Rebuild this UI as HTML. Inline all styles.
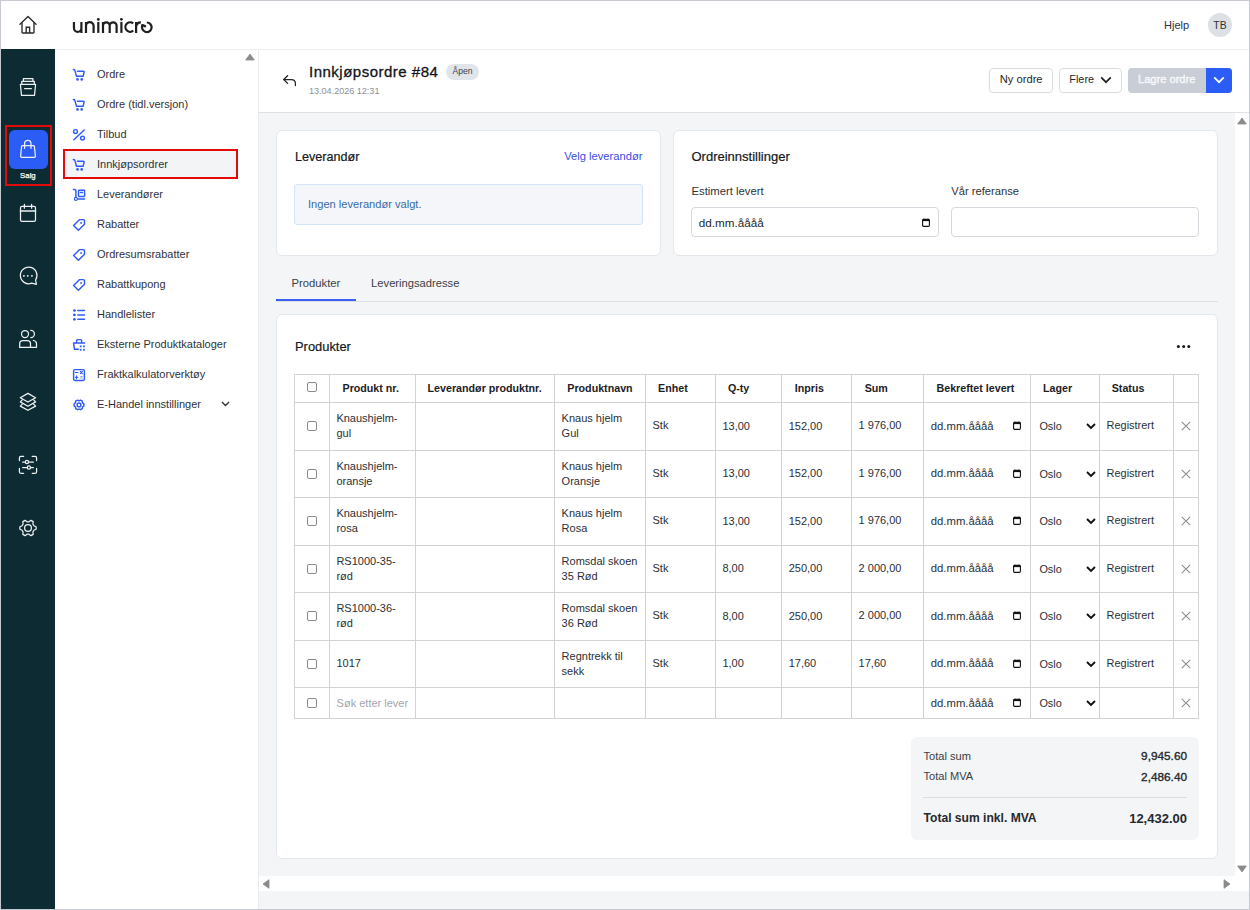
<!DOCTYPE html><html><head><meta charset="utf-8"><style>
html,body{margin:0;padding:0;}
body{width:1250px;height:910px;position:relative;overflow:hidden;background:#f4f5f7;font-family:"Liberation Sans", sans-serif;}
.t{position:absolute;white-space:nowrap;line-height:1;}
.b{position:absolute;box-sizing:border-box;}
.i{position:absolute;overflow:visible;}
</style></head><body>
<div class="b" style="left:0px;top:0px;width:1250px;height:50px;background:#fff;"></div>
<div class="b" style="left:0px;top:49px;width:1250px;height:1px;background:#eceef1;"></div>
<svg class="i" style="left:19px;top:15px;" width="18" height="19" viewBox="0 0 18 19" fill="none"><path d="M1 9.2 L9 1.4 L17 9.2" stroke="#2a2a2a" stroke-width="1.35" stroke-linecap="round" stroke-linejoin="round"/><path d="M3 7.4 V17.3 Q3 18 3.7 18 H14.3 Q15 18 15 17.3 V7.4" stroke="#2a2a2a" stroke-width="1.35" stroke-linejoin="round"/><path d="M7.2 18 V12.2 H10.6 V18" stroke="#2a2a2a" stroke-width="1.4"/></svg>
<svg class="i" style="left:0px;top:0px;" width="160" height="40" viewBox="0 0 160 40" fill="none"><g stroke="#1f1f1f" stroke-width="2.2" fill="none"><path d="M73.95 21.9 V27.9 A3.725 3.9 0 0 0 81.4 27.9 M81.4 21.9 V32.9"/><path d="M86 32.9 V21.9 M86 26.1 A3.8 3.9 0 0 1 93.6 26.1 V32.9"/><path d="M98.3 21.9 V32.9"/><path d="M103 32.9 V21.9 M103 25.6 A3.35 3.3 0 0 1 109.7 25.6 V32.9 M109.7 25.6 A3.45 3.3 0 0 1 116.6 25.6 V32.9"/><path d="M121.4 21.9 V32.9"/><path d="M133.2 23.4 A4.75 4.75 0 1 0 133.2 30.7"/><path d="M136.1 32.9 V21.9 M136.1 27 Q136.4 22.3 140.9 22.3"/><path d="M146.8 22.5 A4.8 4.8 0 1 1 142.64 24.9"/><path d="M142.4 25.2 L145 26.2" stroke-linecap="round" stroke-width="2.4"/></g><circle cx="98.3" cy="19.4" r="1.4" fill="#1f1f1f"/><circle cx="121.4" cy="19.3" r="1.4" fill="#1f1f1f"/></svg>
<div class="t" style="left:1164px;top:19.50px;font-size:11px;color:#2b2f36;font-weight:normal;">Hjelp</div>
<div class="b" style="left:1208px;top:13px;width:24px;height:24px;background:#dde0e5;border-radius:50%;"></div>
<div class="t" style="left:1213.3px;top:20.60px;font-size:10.4px;color:#2b2f36;font-weight:normal;">TB</div>
<div class="b" style="left:0px;top:49px;width:55px;height:861px;background:#0d2b33;"></div>
<svg class="i" style="left:16px;top:76px;" width="24" height="24" viewBox="0 0 24 24" fill="none"><g stroke="#eef1f2" stroke-width="1.25" fill="none" stroke-linecap="round" stroke-linejoin="round"><path d="M7.4 5.2 V2.6 H16.9 V5.2"/><path d="M5.8 7.8 V5.3 H18.3 V7.8"/><path d="M4.4 8.3 H19.6 L18.5 19.4 H5.5 Z"/><path d="M8.6 12.6 H15.4"/></g></svg>
<div class="b" style="left:9px;top:130px;width:39px;height:39px;background:#2b5cf6;border-radius:6px;"></div>
<svg class="i" style="left:16px;top:137px;" width="24" height="24" viewBox="0 0 24 24" fill="none"><g stroke="#eef1f2" stroke-width="1.25" fill="none" stroke-linecap="round" stroke-linejoin="round"><path d="M6.6 8.6 H17.4 Q18.3 8.6 18.4 9.5 L19.4 19.3 Q19.4 20.3 18.4 20.3 H5.6 Q4.6 20.3 4.6 19.3 L5.6 9.5 Q5.7 8.6 6.6 8.6 Z"/><path d="M8.6 11.3 V6.8 Q8.6 3.4 11.8 3.4 Q15 3.4 15 6.8 V11.3"/></g></svg>
<div class="t" style="left:20.1px;top:172.40px;font-size:7.8px;color:#ffffff;font-weight:normal;-webkit-text-stroke:0.25px #fff;">Salg</div>
<div class="b" style="left:5px;top:125px;width:47px;height:61px;border:2px solid #e50a0a;"></div>
<svg class="i" style="left:16px;top:201px;" width="24" height="24" viewBox="0 0 24 24" fill="none"><g stroke="#eef1f2" stroke-width="1.25" fill="none" stroke-linecap="round" stroke-linejoin="round"><rect x="4.5" y="5.4" width="15" height="14.9" rx="1.4"/><path d="M4.5 10 H19.5" stroke-width="1.6"/><path d="M8.4 3.3 V7.2 M15.6 3.3 V7.2"/></g></svg>
<svg class="i" style="left:16px;top:264px;" width="24" height="24" viewBox="0 0 24 24" fill="none"><g stroke="#eef1f2" stroke-width="1.25" fill="none" stroke-linecap="round" stroke-linejoin="round"><path d="M19.6 16 A8.3 8.3 0 1 0 15.6 19.2 L20.4 20.3 Z"/></g><g fill="#eef1f2"><rect x="7.1" y="11.1" width="1.6" height="1.6"/><rect x="10.9" y="11.1" width="1.6" height="1.6"/><rect x="15.1" y="11.1" width="1.6" height="1.6"/></g></svg>
<svg class="i" style="left:16px;top:327px;" width="24" height="24" viewBox="0 0 24 24" fill="none"><g stroke="#eef1f2" stroke-width="1.25" fill="none" stroke-linecap="round" stroke-linejoin="round"><circle cx="9" cy="7" r="3.5"/><path d="M14.8 3.4 A3.6 3.6 0 0 1 14.8 10.6"/><path d="M3.7 20.3 V16.6 Q3.7 13.5 6.8 13.5 H11.4 Q14.5 13.5 14.5 16.6 V20.3"/><path d="M17.4 13.5 Q20.5 13.8 20.5 16.8 V20.3 H3.7"/></g></svg>
<svg class="i" style="left:16px;top:390px;" width="24" height="24" viewBox="0 0 24 24" fill="none"><g stroke="#eef1f2" stroke-width="1.25" fill="none" stroke-linecap="round" stroke-linejoin="round"><path d="M11.9 3.4 L19.6 7.7 L11.9 12 L4.3 7.7 Z"/><path d="M6.3 9.9 L4.3 11.9 L11.9 16.2 L19.6 11.9 L17.6 9.9"/><path d="M6.3 14.1 L4.3 16.1 L11.9 20.3 L19.6 16.1 L17.6 14.1"/></g></svg>
<svg class="i" style="left:16px;top:453px;" width="24" height="24" viewBox="0 0 24 24" fill="none"><g stroke="#eef1f2" stroke-width="1.25" fill="none" stroke-linecap="round" stroke-linejoin="round"><path d="M3.4 7.6 V4.9 Q3.4 3.4 4.9 3.4 H7.6"/><path d="M16.2 3.4 H19.1 Q20.6 3.4 20.6 4.9 V7.6"/><path d="M20.6 15.4 V18.8 Q20.6 20.3 19.1 20.3 H16.2"/><path d="M7.6 20.3 H4.9 Q3.4 20.3 3.4 18.8 V15.4"/><path d="M6.6 9 H9.3 M12.6 9 H17.4 M6.6 14.5 H11.3 M14.5 14.5 H17.4"/><circle cx="10.95" cy="9" r="1.6"/><circle cx="12.9" cy="14.5" r="1.6"/></g></svg>
<svg class="i" style="left:16px;top:516px;" width="24" height="24" viewBox="0 0 24 24" fill="none"><g stroke="#eef1f2" stroke-width="1.25" fill="none" stroke-linecap="round" stroke-linejoin="round"><path d="M17.88 9.74 L20.10 10.72 L20.10 13.28 L17.88 14.26 L16.90 15.96 L17.16 18.37 L14.94 19.66 L12.99 18.22 L11.01 18.22 L9.06 19.66 L6.84 18.37 L7.10 15.96 L6.12 14.26 L3.90 13.28 L3.90 10.72 L6.12 9.74 L7.10 8.04 L6.84 5.63 L9.06 4.34 L11.01 5.78 L12.99 5.78 L14.94 4.34 L17.16 5.63 L16.90 8.04 Z"/><circle cx="12" cy="12" r="3.4"/></g></svg>
<div class="b" style="left:55px;top:50px;width:203px;height:860px;background:#fff;"></div>
<div class="b" style="left:258px;top:50px;width:1px;height:860px;background:#e9ebee;"></div>
<svg class="i" style="left:245px;top:53px;" width="10" height="8" viewBox="0 0 10 8" fill="none"><path d="M5 1 L9.3 7 H0.7 Z" fill="#8a8a8a" stroke="#8a8a8a" stroke-width="0.8" stroke-linejoin="round"/></svg>
<div class="b" style="left:64px;top:150px;width:173px;height:28px;background:#f3f4f6;"></div>
<svg class="i" style="left:70px;top:66px;" width="18" height="18" viewBox="0 0 18 18" fill="none"><g stroke="#2f5bf6" stroke-width="1.45" fill="none" stroke-linecap="round" stroke-linejoin="round"><path d="M3.3 3.6 Q4.5 3.5 4.9 4.6 L6.5 10.2 H13.2 L14.1 5.8 Q14.2 5.3 13.6 5.3 H7.4"/></g><circle cx="7.5" cy="13.4" r="1.3" fill="#2f5bf6"/><circle cx="11.7" cy="13.4" r="1.3" fill="#2f5bf6"/></svg>
<svg class="i" style="left:70px;top:96px;" width="18" height="18" viewBox="0 0 18 18" fill="none"><g stroke="#2f5bf6" stroke-width="1.45" fill="none" stroke-linecap="round" stroke-linejoin="round"><path d="M3.3 3.6 Q4.5 3.5 4.9 4.6 L6.5 10.2 H13.2 L14.1 5.8 Q14.2 5.3 13.6 5.3 H7.4"/></g><circle cx="7.5" cy="13.4" r="1.3" fill="#2f5bf6"/><circle cx="11.7" cy="13.4" r="1.3" fill="#2f5bf6"/></svg>
<svg class="i" style="left:70px;top:156px;" width="18" height="18" viewBox="0 0 18 18" fill="none"><g stroke="#2f5bf6" stroke-width="1.45" fill="none" stroke-linecap="round" stroke-linejoin="round"><path d="M3.3 3.6 Q4.5 3.5 4.9 4.6 L6.5 10.2 H13.2 L14.1 5.8 Q14.2 5.3 13.6 5.3 H7.4"/></g><circle cx="7.5" cy="13.4" r="1.3" fill="#2f5bf6"/><circle cx="11.7" cy="13.4" r="1.3" fill="#2f5bf6"/></svg>
<svg class="i" style="left:70px;top:125px;" width="18" height="18" viewBox="0 0 18 18" fill="none"><g stroke="#2f5bf6" stroke-width="1.45" fill="none" stroke-linecap="round" stroke-linejoin="round"><path d="M14.2 4.9 L3.9 14.8"/><circle cx="5.5" cy="6.5" r="1.9"/><circle cx="12.5" cy="13.1" r="1.9"/></g></svg>
<svg class="i" style="left:70px;top:185px;" width="18" height="18" viewBox="0 0 18 18" fill="none"><g stroke="#2f5bf6" stroke-width="1.45" fill="none" stroke-linecap="round" stroke-linejoin="round"><path d="M3.4 4.4 H4.6 Q5.9 4.4 5.9 5.9 V12.3"/><rect x="8.5" y="5.3" width="6.1" height="6.1" rx="0.7"/><path d="M10.5 7.4 H12.6"/><path d="M7.9 14 H14.6"/></g><circle cx="5.9" cy="13.9" r="1.5" stroke="#2f5bf6" stroke-width="1.2" fill="none"/></svg>
<svg class="i" style="left:70px;top:215px;" width="18" height="18" viewBox="0 0 18 18" fill="none"><g stroke="#2f5bf6" stroke-width="1.45" fill="none" stroke-linecap="round" stroke-linejoin="round"><path d="M9.6 4.6 H13.3 Q14.5 4.6 14.5 5.8 V9.2 L8.4 15.3 L3.6 10.5 Z"/></g><circle cx="11.1" cy="7.9" r="0.95" fill="#2f5bf6"/></svg>
<svg class="i" style="left:70px;top:245px;" width="18" height="18" viewBox="0 0 18 18" fill="none"><g stroke="#2f5bf6" stroke-width="1.45" fill="none" stroke-linecap="round" stroke-linejoin="round"><path d="M9.6 4.6 H13.3 Q14.5 4.6 14.5 5.8 V9.2 L8.4 15.3 L3.6 10.5 Z"/></g><circle cx="11.1" cy="7.9" r="0.95" fill="#2f5bf6"/></svg>
<svg class="i" style="left:70px;top:275px;" width="18" height="18" viewBox="0 0 18 18" fill="none"><g stroke="#2f5bf6" stroke-width="1.45" fill="none" stroke-linecap="round" stroke-linejoin="round"><path d="M9.6 4.6 H13.3 Q14.5 4.6 14.5 5.8 V9.2 L8.4 15.3 L3.6 10.5 Z"/></g><circle cx="11.1" cy="7.9" r="0.95" fill="#2f5bf6"/></svg>
<svg class="i" style="left:70px;top:305px;" width="18" height="18" viewBox="0 0 18 18" fill="none"><g fill="#2f5bf6"><circle cx="4.45" cy="5.5" r="1.35"/><circle cx="4.45" cy="9.9" r="1.35"/><circle cx="4.45" cy="14.3" r="1.35"/></g><g stroke="#2f5bf6" stroke-width="1.5" stroke-linecap="round"><path d="M7.8 5.5 H14.5 M7.8 9.9 H14.5 M7.8 14.3 H14.5"/></g></svg>
<svg class="i" style="left:70px;top:335px;" width="18" height="18" viewBox="0 0 18 18" fill="none"><g stroke="#2f5bf6" stroke-width="1.45" fill="none" stroke-linecap="round" stroke-linejoin="round" stroke-width="1.3"><path d="M6.6 7.6 V5.5 Q6.6 4.6 7.5 4.6 H10.8 Q11.6 4.6 11.6 5.5 V7.6"/><path d="M14.6 7.9 H3.5 L4.5 14.3 H8.4"/></g><g fill="#2f5bf6"><rect x="9.8" y="10.5" width="1.8" height="1.8"/><rect x="13.1" y="10.5" width="1.8" height="1.8"/><rect x="9.8" y="13.9" width="1.8" height="1.8"/><rect x="13.1" y="13.9" width="1.8" height="1.8"/></g></svg>
<svg class="i" style="left:70px;top:365px;" width="18" height="18" viewBox="0 0 18 18" fill="none"><g stroke="#2f5bf6" stroke-width="1.45" fill="none" stroke-linecap="round" stroke-linejoin="round" stroke-width="1.3"><rect x="3.6" y="4.6" width="10.8" height="10.8" rx="1.3"/></g><g stroke="#2f5bf6" stroke-width="1.1" fill="none" stroke-linecap="round"><path d="M5.3 7.5 H8.1 M10.4 6.4 L12.4 8.6 M12.4 6.4 L10.4 8.6 M5.2 12.3 H7.9 M6.55 10.9 V13.7"/></g><g stroke="#2f5bf6" stroke-width="0.9" opacity="0.6"><path d="M10.2 11.5 H12.7 M10.2 13 H12.7"/></g></svg>
<svg class="i" style="left:70px;top:395px;" width="18" height="18" viewBox="0 0 18 18" fill="none"><g stroke="#2f5bf6" stroke-width="1.45" fill="none" stroke-linecap="round" stroke-linejoin="round" stroke-width="1.3"><path d="M12.88 8.17 L13.87 8.78 L13.87 11.02 L12.88 11.63 L12.44 12.40 L12.41 13.56 L10.46 14.68 L9.44 14.13 L8.56 14.13 L7.54 14.68 L5.59 13.56 L5.56 12.40 L5.12 11.63 L4.13 11.02 L4.13 8.78 L5.12 8.17 L5.56 7.40 L5.59 6.24 L7.54 5.12 L8.56 5.67 L9.44 5.67 L10.46 5.12 L12.41 6.24 L12.44 7.40 Z"/><circle cx="9" cy="9.9" r="1.9"/></g></svg>
<div class="t" style="left:97px;top:68.50px;font-size:11px;color:#2f3338;font-weight:normal;">Ordre</div>
<div class="t" style="left:97px;top:98.50px;font-size:11px;color:#2f3338;font-weight:normal;">Ordre (tidl.versjon)</div>
<div class="t" style="left:97px;top:128.50px;font-size:11px;color:#2f3338;font-weight:normal;">Tilbud</div>
<div class="t" style="left:97px;top:158.50px;font-size:11px;color:#2f3338;font-weight:normal;">Innkjøpsordrer</div>
<div class="t" style="left:97px;top:188.50px;font-size:11px;color:#2f3338;font-weight:normal;">Leverandører</div>
<div class="t" style="left:97px;top:218.50px;font-size:11px;color:#2f3338;font-weight:normal;">Rabatter</div>
<div class="t" style="left:97px;top:248.50px;font-size:11px;color:#2f3338;font-weight:normal;">Ordresumsrabatter</div>
<div class="t" style="left:97px;top:278.50px;font-size:11px;color:#2f3338;font-weight:normal;">Rabattkupong</div>
<div class="t" style="left:97px;top:308.50px;font-size:11px;color:#2f3338;font-weight:normal;">Handlelister</div>
<div class="t" style="left:97px;top:338.50px;font-size:11px;color:#2f3338;font-weight:normal;">Eksterne Produktkataloger</div>
<div class="t" style="left:97px;top:368.50px;font-size:11px;color:#2f3338;font-weight:normal;">Fraktkalkulatorverktøy</div>
<div class="t" style="left:97px;top:398.50px;font-size:11px;color:#2f3338;font-weight:normal;">E-Handel innstillinger</div>
<svg class="i" style="left:221px;top:401px;" width="9" height="6" viewBox="0 0 9 6" fill="none"><path d="M1 1 L4.5 4.5 L8 1" stroke="#333" stroke-width="1.4" fill="none"/></svg>
<div class="b" style="left:63px;top:149px;width:175px;height:30px;border:2px solid #e50a0a;"></div>
<div class="b" style="left:259px;top:50px;width:991px;height:62px;background:#fff;"></div>
<div class="b" style="left:259px;top:112px;width:991px;height:1px;background:#dde1e6;"></div>
<svg class="i" style="left:278px;top:70px;" width="24" height="24" viewBox="0 0 24 24" fill="none"><g stroke="#232323" stroke-width="1.25" fill="none" stroke-linecap="round" stroke-linejoin="round"><path d="M9.6 5.7 L5.7 9.5 L9.6 13.4"/><path d="M6 9.5 H13.4 Q17.4 9.5 17.4 13.5 V15.6"/></g></svg>
<div class="t" style="left:309px;top:64.10px;font-size:15px;color:#111418;font-weight:normal;letter-spacing:0.5px;-webkit-text-stroke:0.3px #111418;">Innkjøpsordre #84</div>
<div class="b" style="left:446px;top:64px;width:33px;height:16px;background:#e1e4e8;border-radius:8px;"></div>
<div class="t" style="left:452.5px;top:66.60px;font-size:8.6px;color:#3b3f45;font-weight:normal;">Åpen</div>
<div class="t" style="left:309px;top:87.47px;font-size:9.06px;color:#8b9097;font-weight:normal;">13.04.2026 12:31</div>
<div class="b" style="left:989px;top:68px;width:64px;height:25px;background:#fff;border:1px solid #d9dde2;border-radius:4px;"></div>
<div class="t" style="left:999.7px;top:73.90px;font-size:11.2px;color:#25292e;font-weight:normal;">Ny ordre</div>
<div class="b" style="left:1059px;top:68px;width:63px;height:25px;background:#fff;border:1px solid #d9dde2;border-radius:4px;"></div>
<div class="t" style="left:1069.3px;top:74.05px;font-size:10.9px;color:#25292e;font-weight:normal;">Flere</div>
<svg class="i" style="left:1100px;top:76px;" width="12" height="8" viewBox="0 0 12 8" fill="none"><path d="M1.2 1.4 L6 6.2 L10.8 1.4" stroke="#222" stroke-width="1.7" fill="none"/></svg>
<div class="b" style="left:1128px;top:68px;width:104px;height:25px;background:#c9ced6;border-radius:4px;"></div>
<div class="b" style="left:1206px;top:68px;width:26px;height:25px;background:#2b5cf6;border-radius:0 4px 4px 0;"></div>
<div class="t" style="left:1138px;top:73.95px;font-size:11.1px;color:#f8f9fb;font-weight:normal;-webkit-text-stroke:0.35px #f8f9fb;">Lagre ordre</div>
<svg class="i" style="left:1213px;top:76px;" width="12" height="8" viewBox="0 0 12 8" fill="none"><path d="M1.2 1.4 L6 6.2 L10.8 1.4" stroke="#fff" stroke-width="1.7" fill="none"/></svg>
<div class="b" style="left:276px;top:130px;width:385px;height:126px;background:#fff;border:1px solid #e4e7eb;border-radius:6px;"></div>
<div class="b" style="left:673px;top:130px;width:545px;height:126px;background:#fff;border:1px solid #e4e7eb;border-radius:6px;"></div>
<div class="t" style="left:295px;top:150.50px;font-size:12.6px;color:#15181c;font-weight:normal;-webkit-text-stroke:0.2px #15181c;">Leverandør</div>
<div class="t" style="right:607.5px;top:151.20px;font-size:11.2px;color:#3a50e0;font-weight:normal;">Velg leverandør</div>
<div class="b" style="left:294px;top:184px;width:349px;height:41px;background:#f4f6f9;border:1px solid #d3e5f6;border-radius:3px;"></div>
<div class="t" style="left:308px;top:198.75px;font-size:11.1px;color:#386ca8;font-weight:normal;">Ingen leverandør valgt.</div>
<div class="t" style="left:691.5px;top:150.30px;font-size:13px;color:#15181c;font-weight:normal;-webkit-text-stroke:0.2px #15181c;">Ordreinnstillinger</div>
<div class="t" style="left:691.5px;top:185.65px;font-size:11.3px;color:#2f3338;font-weight:normal;">Estimert levert</div>
<div class="t" style="left:951.3px;top:185.70px;font-size:11.2px;color:#2f3338;font-weight:normal;">Vår referanse</div>
<div class="b" style="left:691px;top:207px;width:248px;height:30px;background:#fff;border:1px solid #d5d9de;border-radius:4px;"></div>
<div class="b" style="left:951px;top:207px;width:248px;height:30px;background:#fff;border:1px solid #d5d9de;border-radius:4px;"></div>
<div class="t" style="left:698.7px;top:216.85px;font-size:11.7px;color:#25292e;font-weight:normal;">dd.mm.åååå</div>
<svg class="i" style="left:921.5px;top:218px;" width="8" height="9" viewBox="0 0 8 9" fill="none"><rect x="0.6" y="1.2" width="6.8" height="7.2" rx="1.2" stroke="#111" stroke-width="1.1" fill="none"/><rect x="0.6" y="1.1" width="6.8" height="2" fill="#111"/><path d="M1.9 1.6 V0.4 M6.1 1.6 V0.4" stroke="#111" stroke-width="0.8"/></svg>
<div class="b" style="left:276px;top:301px;width:942px;height:1px;background:#dde1e6;"></div>
<div class="b" style="left:276px;top:299px;width:80px;height:2px;background:#3b5ff0;"></div>
<div class="t" style="left:291.6px;top:277.77px;font-size:11.25px;color:#3a3f46;font-weight:normal;">Produkter</div>
<div class="t" style="left:371.1px;top:277.80px;font-size:11.2px;color:#3a3f46;font-weight:normal;">Leveringsadresse</div>
<div class="b" style="left:276px;top:314px;width:942px;height:545px;background:#fff;border:1px solid #e4e7eb;border-radius:6px;"></div>
<div class="t" style="left:295px;top:341.15px;font-size:12.9px;color:#15181c;font-weight:normal;-webkit-text-stroke:0.2px #15181c;">Produkter</div>
<svg class="i" style="left:1170px;top:340px;" width="26" height="12" viewBox="0 0 26 12" fill="none"><g fill="#1a1a1a"><circle cx="8.4" cy="6.5" r="1.5"/><circle cx="13.7" cy="6.5" r="1.5"/><circle cx="18.8" cy="6.5" r="1.5"/></g></svg>
<div class="b" style="left:294px;top:374px;width:905px;height:345px;background:#fff;"></div>
<div class="b" style="left:294px;top:374px;width:1px;height:345px;background:#d3d3d3;"></div>
<div class="b" style="left:329px;top:374px;width:1px;height:345px;background:#d3d3d3;"></div>
<div class="b" style="left:415px;top:374px;width:1px;height:345px;background:#d3d3d3;"></div>
<div class="b" style="left:554px;top:374px;width:1px;height:345px;background:#d3d3d3;"></div>
<div class="b" style="left:645px;top:374px;width:1px;height:345px;background:#d3d3d3;"></div>
<div class="b" style="left:715px;top:374px;width:1px;height:345px;background:#d3d3d3;"></div>
<div class="b" style="left:781px;top:374px;width:1px;height:345px;background:#d3d3d3;"></div>
<div class="b" style="left:851px;top:374px;width:1px;height:345px;background:#d3d3d3;"></div>
<div class="b" style="left:923px;top:374px;width:1px;height:345px;background:#d3d3d3;"></div>
<div class="b" style="left:1030px;top:374px;width:1px;height:345px;background:#d3d3d3;"></div>
<div class="b" style="left:1099px;top:374px;width:1px;height:345px;background:#d3d3d3;"></div>
<div class="b" style="left:1173px;top:374px;width:1px;height:345px;background:#d3d3d3;"></div>
<div class="b" style="left:1198px;top:374px;width:1px;height:345px;background:#d3d3d3;"></div>
<div class="b" style="left:294px;top:374px;width:905px;height:1px;background:#d3d3d3;"></div>
<div class="b" style="left:294px;top:402px;width:905px;height:1px;background:#d3d3d3;"></div>
<div class="b" style="left:294px;top:450px;width:905px;height:1px;background:#d3d3d3;"></div>
<div class="b" style="left:294px;top:497px;width:905px;height:1px;background:#d3d3d3;"></div>
<div class="b" style="left:294px;top:545px;width:905px;height:1px;background:#d3d3d3;"></div>
<div class="b" style="left:294px;top:592px;width:905px;height:1px;background:#d3d3d3;"></div>
<div class="b" style="left:294px;top:640px;width:905px;height:1px;background:#d3d3d3;"></div>
<div class="b" style="left:294px;top:687px;width:905px;height:1px;background:#d3d3d3;"></div>
<div class="b" style="left:294px;top:718px;width:905px;height:1px;background:#d3d3d3;"></div>
<div class="t" style="left:342.5px;top:383.05px;font-size:10.7px;color:#1d2126;font-weight:bold;">Produkt nr.</div>
<div class="t" style="left:427.6px;top:383.05px;font-size:10.7px;color:#1d2126;font-weight:bold;">Leverandør produktnr.</div>
<div class="t" style="left:567.3px;top:383.05px;font-size:10.7px;color:#1d2126;font-weight:bold;">Produktnavn</div>
<div class="t" style="left:658px;top:383.05px;font-size:10.7px;color:#1d2126;font-weight:bold;">Enhet</div>
<div class="t" style="left:727.9px;top:383.05px;font-size:10.7px;color:#1d2126;font-weight:bold;">Q-ty</div>
<div class="t" style="left:794.8px;top:383.05px;font-size:10.7px;color:#1d2126;font-weight:bold;">Inpris</div>
<div class="t" style="left:864.7px;top:383.05px;font-size:10.7px;color:#1d2126;font-weight:bold;">Sum</div>
<div class="t" style="left:936.5px;top:383.05px;font-size:10.7px;color:#1d2126;font-weight:bold;">Bekreftet levert</div>
<div class="t" style="left:1043px;top:383.05px;font-size:10.7px;color:#1d2126;font-weight:bold;">Lager</div>
<div class="t" style="left:1111.7px;top:383.05px;font-size:10.7px;color:#1d2126;font-weight:bold;">Status</div>
<div class="b" style="left:307px;top:382px;width:10px;height:10px;background:#fff;border:1px solid #8a8a8a;border-radius:2px;"></div>
<div class="b" style="left:307px;top:421px;width:10px;height:10px;background:#fff;border:1px solid #8a8a8a;border-radius:2px;"></div>
<div class="t" style="left:336.4px;top:413.30px;font-size:11px;color:#2b2f36;font-weight:normal;">Knaushjelm-</div>
<div class="t" style="left:336.4px;top:428.30px;font-size:11px;color:#2b2f36;font-weight:normal;">gul</div>
<div class="t" style="left:561.6px;top:413.30px;font-size:11px;color:#2b2f36;font-weight:normal;">Knaus hjelm</div>
<div class="t" style="left:561.6px;top:428.30px;font-size:11px;color:#2b2f36;font-weight:normal;">Gul</div>
<div class="t" style="left:652.5px;top:420.30px;font-size:11px;color:#2b2f36;font-weight:normal;">Stk</div>
<div class="t" style="left:722.4px;top:420.90px;font-size:11px;color:#2b2f36;font-weight:normal;">13,00</div>
<div class="t" style="left:788.7px;top:420.90px;font-size:11px;color:#2b2f36;font-weight:normal;">152,00</div>
<div class="t" style="left:858.6px;top:420.30px;font-size:11px;color:#2b2f36;font-weight:normal;">1 976,00</div>
<div class="t" style="left:930.8px;top:420.95px;font-size:11.3px;color:#2b2f36;font-weight:normal;">dd.mm.åååå</div>
<svg class="i" style="left:1013px;top:421px;" width="8" height="9" viewBox="0 0 8 9" fill="none"><rect x="0.6" y="1.2" width="6.8" height="7.2" rx="1.2" stroke="#111" stroke-width="1.1" fill="none"/><rect x="0.6" y="1.1" width="6.8" height="2" fill="#111"/><path d="M1.9 1.6 V0.4 M6.1 1.6 V0.4" stroke="#111" stroke-width="0.8"/></svg>
<div class="t" style="left:1039.4px;top:421.15px;font-size:10.9px;color:#2b2f36;font-weight:normal;">Oslo</div>
<svg class="i" style="left:1086px;top:423.2px;" width="10" height="7" viewBox="0 0 10 7" fill="none"><path d="M1 1 L5 5 L9 1" stroke="#111" stroke-width="1.9" fill="none"/></svg>
<div class="t" style="left:1106.6px;top:420.12px;font-size:10.95px;color:#2b2f36;font-weight:normal;">Registrert</div>
<svg class="i" style="left:1181px;top:421.2px;" width="10" height="10" viewBox="0 0 10 10" fill="none"><path d="M0.8 0.8 L9.2 9.2 M9.2 0.8 L0.8 9.2" stroke="#8e8e8e" stroke-width="1.1"/></svg>
<div class="b" style="left:307px;top:469px;width:10px;height:10px;background:#fff;border:1px solid #8a8a8a;border-radius:2px;"></div>
<div class="t" style="left:336.4px;top:460.80px;font-size:11px;color:#2b2f36;font-weight:normal;">Knaushjelm-</div>
<div class="t" style="left:336.4px;top:475.80px;font-size:11px;color:#2b2f36;font-weight:normal;">oransje</div>
<div class="t" style="left:561.6px;top:460.80px;font-size:11px;color:#2b2f36;font-weight:normal;">Knaus hjelm</div>
<div class="t" style="left:561.6px;top:475.80px;font-size:11px;color:#2b2f36;font-weight:normal;">Oransje</div>
<div class="t" style="left:652.5px;top:467.80px;font-size:11px;color:#2b2f36;font-weight:normal;">Stk</div>
<div class="t" style="left:722.4px;top:468.40px;font-size:11px;color:#2b2f36;font-weight:normal;">13,00</div>
<div class="t" style="left:788.7px;top:468.40px;font-size:11px;color:#2b2f36;font-weight:normal;">152,00</div>
<div class="t" style="left:858.6px;top:467.80px;font-size:11px;color:#2b2f36;font-weight:normal;">1 976,00</div>
<div class="t" style="left:930.8px;top:468.45px;font-size:11.3px;color:#2b2f36;font-weight:normal;">dd.mm.åååå</div>
<svg class="i" style="left:1013px;top:469px;" width="8" height="9" viewBox="0 0 8 9" fill="none"><rect x="0.6" y="1.2" width="6.8" height="7.2" rx="1.2" stroke="#111" stroke-width="1.1" fill="none"/><rect x="0.6" y="1.1" width="6.8" height="2" fill="#111"/><path d="M1.9 1.6 V0.4 M6.1 1.6 V0.4" stroke="#111" stroke-width="0.8"/></svg>
<div class="t" style="left:1039.4px;top:468.65px;font-size:10.9px;color:#2b2f36;font-weight:normal;">Oslo</div>
<svg class="i" style="left:1086px;top:470.7px;" width="10" height="7" viewBox="0 0 10 7" fill="none"><path d="M1 1 L5 5 L9 1" stroke="#111" stroke-width="1.9" fill="none"/></svg>
<div class="t" style="left:1106.6px;top:467.62px;font-size:10.95px;color:#2b2f36;font-weight:normal;">Registrert</div>
<svg class="i" style="left:1181px;top:468.7px;" width="10" height="10" viewBox="0 0 10 10" fill="none"><path d="M0.8 0.8 L9.2 9.2 M9.2 0.8 L0.8 9.2" stroke="#8e8e8e" stroke-width="1.1"/></svg>
<div class="b" style="left:307px;top:516px;width:10px;height:10px;background:#fff;border:1px solid #8a8a8a;border-radius:2px;"></div>
<div class="t" style="left:336.4px;top:508.30px;font-size:11px;color:#2b2f36;font-weight:normal;">Knaushjelm-</div>
<div class="t" style="left:336.4px;top:523.30px;font-size:11px;color:#2b2f36;font-weight:normal;">rosa</div>
<div class="t" style="left:561.6px;top:508.30px;font-size:11px;color:#2b2f36;font-weight:normal;">Knaus hjelm</div>
<div class="t" style="left:561.6px;top:523.30px;font-size:11px;color:#2b2f36;font-weight:normal;">Rosa</div>
<div class="t" style="left:652.5px;top:515.30px;font-size:11px;color:#2b2f36;font-weight:normal;">Stk</div>
<div class="t" style="left:722.4px;top:515.90px;font-size:11px;color:#2b2f36;font-weight:normal;">13,00</div>
<div class="t" style="left:788.7px;top:515.90px;font-size:11px;color:#2b2f36;font-weight:normal;">152,00</div>
<div class="t" style="left:858.6px;top:515.30px;font-size:11px;color:#2b2f36;font-weight:normal;">1 976,00</div>
<div class="t" style="left:930.8px;top:515.95px;font-size:11.3px;color:#2b2f36;font-weight:normal;">dd.mm.åååå</div>
<svg class="i" style="left:1013px;top:516px;" width="8" height="9" viewBox="0 0 8 9" fill="none"><rect x="0.6" y="1.2" width="6.8" height="7.2" rx="1.2" stroke="#111" stroke-width="1.1" fill="none"/><rect x="0.6" y="1.1" width="6.8" height="2" fill="#111"/><path d="M1.9 1.6 V0.4 M6.1 1.6 V0.4" stroke="#111" stroke-width="0.8"/></svg>
<div class="t" style="left:1039.4px;top:516.15px;font-size:10.9px;color:#2b2f36;font-weight:normal;">Oslo</div>
<svg class="i" style="left:1086px;top:518.2px;" width="10" height="7" viewBox="0 0 10 7" fill="none"><path d="M1 1 L5 5 L9 1" stroke="#111" stroke-width="1.9" fill="none"/></svg>
<div class="t" style="left:1106.6px;top:515.12px;font-size:10.95px;color:#2b2f36;font-weight:normal;">Registrert</div>
<svg class="i" style="left:1181px;top:516.2px;" width="10" height="10" viewBox="0 0 10 10" fill="none"><path d="M0.8 0.8 L9.2 9.2 M9.2 0.8 L0.8 9.2" stroke="#8e8e8e" stroke-width="1.1"/></svg>
<div class="b" style="left:307px;top:564px;width:10px;height:10px;background:#fff;border:1px solid #8a8a8a;border-radius:2px;"></div>
<div class="t" style="left:336.4px;top:555.80px;font-size:11px;color:#2b2f36;font-weight:normal;">RS1000-35-</div>
<div class="t" style="left:336.4px;top:570.80px;font-size:11px;color:#2b2f36;font-weight:normal;">rød</div>
<div class="t" style="left:561.6px;top:555.80px;font-size:11px;color:#2b2f36;font-weight:normal;">Romsdal skoen</div>
<div class="t" style="left:561.6px;top:570.80px;font-size:11px;color:#2b2f36;font-weight:normal;">35 Rød</div>
<div class="t" style="left:652.5px;top:562.80px;font-size:11px;color:#2b2f36;font-weight:normal;">Stk</div>
<div class="t" style="left:722.4px;top:563.40px;font-size:11px;color:#2b2f36;font-weight:normal;">8,00</div>
<div class="t" style="left:788.7px;top:563.40px;font-size:11px;color:#2b2f36;font-weight:normal;">250,00</div>
<div class="t" style="left:858.6px;top:562.80px;font-size:11px;color:#2b2f36;font-weight:normal;">2 000,00</div>
<div class="t" style="left:930.8px;top:563.45px;font-size:11.3px;color:#2b2f36;font-weight:normal;">dd.mm.åååå</div>
<svg class="i" style="left:1013px;top:564px;" width="8" height="9" viewBox="0 0 8 9" fill="none"><rect x="0.6" y="1.2" width="6.8" height="7.2" rx="1.2" stroke="#111" stroke-width="1.1" fill="none"/><rect x="0.6" y="1.1" width="6.8" height="2" fill="#111"/><path d="M1.9 1.6 V0.4 M6.1 1.6 V0.4" stroke="#111" stroke-width="0.8"/></svg>
<div class="t" style="left:1039.4px;top:563.65px;font-size:10.9px;color:#2b2f36;font-weight:normal;">Oslo</div>
<svg class="i" style="left:1086px;top:565.7px;" width="10" height="7" viewBox="0 0 10 7" fill="none"><path d="M1 1 L5 5 L9 1" stroke="#111" stroke-width="1.9" fill="none"/></svg>
<div class="t" style="left:1106.6px;top:562.62px;font-size:10.95px;color:#2b2f36;font-weight:normal;">Registrert</div>
<svg class="i" style="left:1181px;top:563.7px;" width="10" height="10" viewBox="0 0 10 10" fill="none"><path d="M0.8 0.8 L9.2 9.2 M9.2 0.8 L0.8 9.2" stroke="#8e8e8e" stroke-width="1.1"/></svg>
<div class="b" style="left:307px;top:611px;width:10px;height:10px;background:#fff;border:1px solid #8a8a8a;border-radius:2px;"></div>
<div class="t" style="left:336.4px;top:603.30px;font-size:11px;color:#2b2f36;font-weight:normal;">RS1000-36-</div>
<div class="t" style="left:336.4px;top:618.30px;font-size:11px;color:#2b2f36;font-weight:normal;">rød</div>
<div class="t" style="left:561.6px;top:603.30px;font-size:11px;color:#2b2f36;font-weight:normal;">Romsdal skoen</div>
<div class="t" style="left:561.6px;top:618.30px;font-size:11px;color:#2b2f36;font-weight:normal;">36 Rød</div>
<div class="t" style="left:652.5px;top:610.30px;font-size:11px;color:#2b2f36;font-weight:normal;">Stk</div>
<div class="t" style="left:722.4px;top:610.90px;font-size:11px;color:#2b2f36;font-weight:normal;">8,00</div>
<div class="t" style="left:788.7px;top:610.90px;font-size:11px;color:#2b2f36;font-weight:normal;">250,00</div>
<div class="t" style="left:858.6px;top:610.30px;font-size:11px;color:#2b2f36;font-weight:normal;">2 000,00</div>
<div class="t" style="left:930.8px;top:610.95px;font-size:11.3px;color:#2b2f36;font-weight:normal;">dd.mm.åååå</div>
<svg class="i" style="left:1013px;top:611px;" width="8" height="9" viewBox="0 0 8 9" fill="none"><rect x="0.6" y="1.2" width="6.8" height="7.2" rx="1.2" stroke="#111" stroke-width="1.1" fill="none"/><rect x="0.6" y="1.1" width="6.8" height="2" fill="#111"/><path d="M1.9 1.6 V0.4 M6.1 1.6 V0.4" stroke="#111" stroke-width="0.8"/></svg>
<div class="t" style="left:1039.4px;top:611.15px;font-size:10.9px;color:#2b2f36;font-weight:normal;">Oslo</div>
<svg class="i" style="left:1086px;top:613.2px;" width="10" height="7" viewBox="0 0 10 7" fill="none"><path d="M1 1 L5 5 L9 1" stroke="#111" stroke-width="1.9" fill="none"/></svg>
<div class="t" style="left:1106.6px;top:610.12px;font-size:10.95px;color:#2b2f36;font-weight:normal;">Registrert</div>
<svg class="i" style="left:1181px;top:611.2px;" width="10" height="10" viewBox="0 0 10 10" fill="none"><path d="M0.8 0.8 L9.2 9.2 M9.2 0.8 L0.8 9.2" stroke="#8e8e8e" stroke-width="1.1"/></svg>
<div class="b" style="left:307px;top:659px;width:10px;height:10px;background:#fff;border:1px solid #8a8a8a;border-radius:2px;"></div>
<div class="t" style="left:336.4px;top:658.20px;font-size:11px;color:#2b2f36;font-weight:normal;">1017</div>
<div class="t" style="left:561.6px;top:650.80px;font-size:11px;color:#2b2f36;font-weight:normal;">Regntrekk til</div>
<div class="t" style="left:561.6px;top:665.80px;font-size:11px;color:#2b2f36;font-weight:normal;">sekk</div>
<div class="t" style="left:652.5px;top:657.80px;font-size:11px;color:#2b2f36;font-weight:normal;">Stk</div>
<div class="t" style="left:722.4px;top:658.40px;font-size:11px;color:#2b2f36;font-weight:normal;">1,00</div>
<div class="t" style="left:788.7px;top:658.40px;font-size:11px;color:#2b2f36;font-weight:normal;">17,60</div>
<div class="t" style="left:858.6px;top:657.80px;font-size:11px;color:#2b2f36;font-weight:normal;">17,60</div>
<div class="t" style="left:930.8px;top:658.45px;font-size:11.3px;color:#2b2f36;font-weight:normal;">dd.mm.åååå</div>
<svg class="i" style="left:1013px;top:659px;" width="8" height="9" viewBox="0 0 8 9" fill="none"><rect x="0.6" y="1.2" width="6.8" height="7.2" rx="1.2" stroke="#111" stroke-width="1.1" fill="none"/><rect x="0.6" y="1.1" width="6.8" height="2" fill="#111"/><path d="M1.9 1.6 V0.4 M6.1 1.6 V0.4" stroke="#111" stroke-width="0.8"/></svg>
<div class="t" style="left:1039.4px;top:658.65px;font-size:10.9px;color:#2b2f36;font-weight:normal;">Oslo</div>
<svg class="i" style="left:1086px;top:660.7px;" width="10" height="7" viewBox="0 0 10 7" fill="none"><path d="M1 1 L5 5 L9 1" stroke="#111" stroke-width="1.9" fill="none"/></svg>
<div class="t" style="left:1106.6px;top:657.62px;font-size:10.95px;color:#2b2f36;font-weight:normal;">Registrert</div>
<svg class="i" style="left:1181px;top:658.7px;" width="10" height="10" viewBox="0 0 10 10" fill="none"><path d="M0.8 0.8 L9.2 9.2 M9.2 0.8 L0.8 9.2" stroke="#8e8e8e" stroke-width="1.1"/></svg>
<div class="b" style="left:307px;top:698px;width:10px;height:10px;background:#fff;border:1px solid #8a8a8a;border-radius:2px;"></div>
<div class="t" style="left:336.6px;top:697.50px;font-size:11px;color:#a2a6ab;font-weight:normal;">Søk etter lever</div>
<div class="t" style="left:930.8px;top:697.75px;font-size:11.3px;color:#2b2f36;font-weight:normal;">dd.mm.åååå</div>
<svg class="i" style="left:1013px;top:698px;" width="8" height="9" viewBox="0 0 8 9" fill="none"><rect x="0.6" y="1.2" width="6.8" height="7.2" rx="1.2" stroke="#111" stroke-width="1.1" fill="none"/><rect x="0.6" y="1.1" width="6.8" height="2" fill="#111"/><path d="M1.9 1.6 V0.4 M6.1 1.6 V0.4" stroke="#111" stroke-width="0.8"/></svg>
<div class="t" style="left:1039.4px;top:697.95px;font-size:10.9px;color:#2b2f36;font-weight:normal;">Oslo</div>
<svg class="i" style="left:1086px;top:700px;" width="10" height="7" viewBox="0 0 10 7" fill="none"><path d="M1 1 L5 5 L9 1" stroke="#111" stroke-width="1.9" fill="none"/></svg>
<svg class="i" style="left:1181px;top:698px;" width="10" height="10" viewBox="0 0 10 10" fill="none"><path d="M0.8 0.8 L9.2 9.2 M9.2 0.8 L0.8 9.2" stroke="#8e8e8e" stroke-width="1.1"/></svg>
<div class="b" style="left:911px;top:737px;width:288px;height:103px;background:#f4f5f7;border-radius:6px;"></div>
<div class="t" style="left:923.5px;top:750.55px;font-size:11.1px;color:#3a3f46;font-weight:normal;">Total sum</div>
<div class="t" style="right:63px;top:751.10px;font-size:11.8px;color:#25292e;font-weight:normal;-webkit-text-stroke:0.35px #25292e;">9,945.60</div>
<div class="t" style="left:923.5px;top:771.45px;font-size:11.1px;color:#3a3f46;font-weight:normal;">Total MVA</div>
<div class="t" style="right:63px;top:772.10px;font-size:11.8px;color:#25292e;font-weight:normal;-webkit-text-stroke:0.35px #25292e;">2,486.40</div>
<div class="b" style="left:923px;top:797px;width:264px;height:1px;background:#dadde2;"></div>
<div class="t" style="left:923.5px;top:812.35px;font-size:12.1px;color:#25292e;font-weight:bold;">Total sum inkl. MVA</div>
<div class="t" style="right:63px;top:811.90px;font-size:13px;color:#25292e;font-weight:bold;">12,432.00</div>
<div class="b" style="left:1235px;top:113px;width:14px;height:763px;background:#fff;"></div>
<svg class="i" style="left:1237px;top:117px;" width="10" height="8" viewBox="0 0 10 8" fill="none"><path d="M5 1 L9.3 7 H0.7 Z" fill="#8a8a8a" stroke="#8a8a8a" stroke-width="0.8" stroke-linejoin="round"/></svg>
<svg class="i" style="left:1237px;top:865px;" width="10" height="8" viewBox="0 0 10 8" fill="none"><path d="M5 7 L9.3 1 H0.7 Z" fill="#8a8a8a" stroke="#8a8a8a" stroke-width="0.8" stroke-linejoin="round"/></svg>
<div class="b" style="left:259px;top:876px;width:990px;height:15px;background:#fff;"></div>
<svg class="i" style="left:262px;top:879px;" width="8" height="10" viewBox="0 0 8 10" fill="none"><path d="M1 5 L7 0.7 V9.3 Z" fill="#8a8a8a" stroke="#8a8a8a" stroke-width="0.8" stroke-linejoin="round"/></svg>
<svg class="i" style="left:1223px;top:879px;" width="8" height="10" viewBox="0 0 8 10" fill="none"><path d="M7 5 L1 0.7 V9.3 Z" fill="#8a8a8a" stroke="#8a8a8a" stroke-width="0.8" stroke-linejoin="round"/></svg>
<div class="b" style="left:0px;top:0px;width:1250px;height:910px;border:1px solid #c6cad0;"></div>
</body></html>
